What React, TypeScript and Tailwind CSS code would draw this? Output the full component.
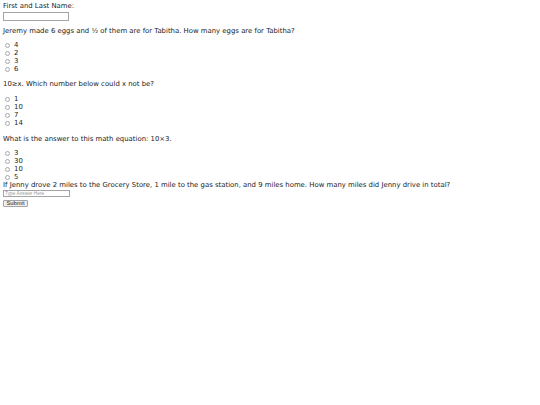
import React from "react";

function Radio({ label }: { label: string }) {
  return (
    <div className="flex h-[8px] items-center">
      <span className="ml-[2px] mr-[4px] box-border block h-[5px] w-[5px] rounded-full border-[0.6px] border-[#a8a8a8] bg-white" />
      <span>{label}</span>
    </div>
  );
}

function Group({ items, className }: { items: string[]; className: string }) {
  return (
    <div className={className}>
      {items.map((i) => (
        <Radio key={i} label={i} />
      ))}
    </div>
  );
}

export default function App() {
  return (
    <div className="min-h-[405px] w-[540px] bg-white pl-[3px] pt-[2px] font-['DejaVu_Sans',sans-serif] text-[6.9px] leading-[8px] text-[#222]">
      <div>First and Last Name:</div>
      <input
        type="text"
        className="mt-[2px] box-border block h-[9px] w-[66px] border-[0.6px] border-[#a4a4a4] bg-white outline-none"
      />
      <p className="mt-[6px]">
        Jeremy made 6 eggs and ½ of them are for Tabitha. How many eggs are for Tabitha?
      </p>
      <Group className="mt-[6px]" items={["4", "2", "3", "6"]} />
      <p className="mt-[7px]">10≥x. Which number below could x not be?</p>
      <Group className="mt-[7px]" items={["1", "10", "7", "14"]} />
      <p className="mt-[8px]">What is the answer to this math equation: 10×3.</p>
      <Group className="mt-[6px]" items={["3", "30", "10", "5"]} />
      <p>
        If Jenny drove 2 miles to the Grocery Store, 1 mile to the gas station, and 9 miles home. How many miles did Jenny drive in total?
      </p>
      <input
        type="text"
        placeholder="Type Answer Here"
        className="mt-[1px] box-border block h-[7px] w-[67px] border-[0.6px] border-[#a4a4a4] bg-white px-[1px] font-['Liberation_Sans',sans-serif] text-[4.8px] leading-[6px] outline-none placeholder:text-[#999]"
      />
      <button
        type="button"
        className="mt-[2.5px] box-border flex h-[7px] w-[25px] items-center justify-center rounded-[1px] border-[0.6px] border-[#a4a4a4] bg-[#efefef] p-0 font-['Liberation_Sans',sans-serif] text-[5.8px] leading-[6px] text-[#222]"
      >
        Submit
      </button>
    </div>
  );
}
